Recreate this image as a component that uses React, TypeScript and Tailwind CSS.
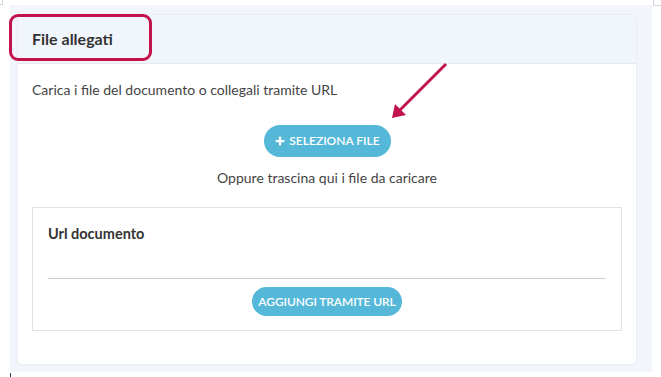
import { Plus } from "lucide-react";

const font = { fontFamily: "Lato, 'Noto Sans', sans-serif" };

export default function App() {
    return (
        <div className="relative w-[661px] h-[377px] bg-white" style={font}>
            {/* page crop marks */}
            <div className="absolute left-0 top-0 w-[3px] h-[5px] border-r border-b border-gray-300" />
            <div className="absolute left-[653px] top-0 w-[8px] h-[6px] border-l border-b border-gray-300" />
            <div className="absolute left-[10px] top-[373px] w-[1px] h-[4px] bg-gray-700" />

            <div className="absolute left-[10px] top-[5px] w-[642px] h-[367px] bg-[#f2f6fc] pt-[10px] pl-[8px]">
                <div className="w-[618px] h-[349px] bg-white rounded-[4px] shadow-[0_0_2px_rgba(0,0,0,0.12)] flex flex-col">
                    <div className="h-[49px] bg-[#f1f6fd] border-b border-[#e6e9ee] rounded-t-[4px] flex items-center px-[14px]">
                        <h3 className="text-[16px] font-bold text-[#333]">File allegati</h3>
                    </div>
                    <div className="px-[14px] pt-[16px] flex flex-col">
                        <p className="text-[14px] leading-[20px] text-[#444]">
                            Carica i file del documento o collegali tramite URL
                        </p>
                        <div className="flex justify-center mt-[25px]">
                            <button className="h-[32px] w-[127px] rounded-full bg-[#55b8d8] text-white text-[12px] font-semibold whitespace-nowrap flex items-center justify-center gap-[3px]">
                                <Plus className="h-[12px] w-[12px]" strokeWidth={4.5} />
                                SELEZIONA FILE
                            </button>
                        </div>
                        <p className="text-center text-[14px] leading-[20px] text-[#444] mt-[11px]">
                            Oppure trascina qui i file da caricare
                        </p>
                        <div className="mt-[19px] h-[124px] border border-[#e1e1e1] px-[15px] pt-[16px] flex flex-col">
                            <label className="text-[14.5px] leading-[20px] font-bold text-[#333]">Url documento</label>
                            <div className="mt-[34px] border-b border-[#cfcfcf]" />
                            <div className="flex justify-center mt-[8px]">
                                <button className="h-[29px] w-[150px] rounded-full bg-[#55b8d8] text-white text-[12px] tracking-[-0.1px] font-semibold whitespace-nowrap">
                                    AGGIUNGI TRAMITE URL
                                </button>
                            </div>
                        </div>
                    </div>
                </div>
            </div>

            {/* annotation highlight */}
            <div className="absolute left-[9px] top-[14px] w-[143px] h-[47px] border-[3px] border-[#c2134d] rounded-[9px]" />
            <svg className="absolute left-0 top-0" width="661" height="377">
                <line x1="446" y1="64" x2="398" y2="112" stroke="#c2134d" strokeWidth="3" />
                <polygon points="392,118 395,104 406,115" fill="#c2134d" />
            </svg>
        </div>
    );
}
